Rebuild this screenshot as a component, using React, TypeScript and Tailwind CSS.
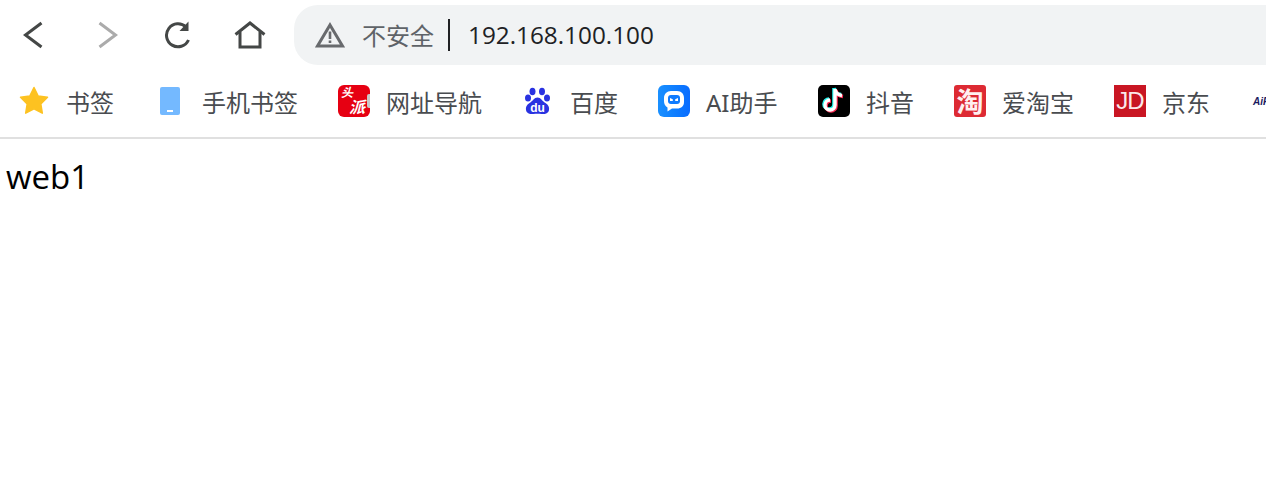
import type { ReactNode } from "react";

const CJK = "font-['Noto_Sans','Noto_Sans_CJK_SC',sans-serif]";

function Back() {
  return (
    <svg width="24" height="28" viewBox="0 0 24 28" fill="none" stroke="#444746" strokeWidth="3">
      <path d="M19.5 2 L3.5 14 L19.5 26" />
    </svg>
  );
}

function Forward() {
  return (
    <svg width="24" height="28" viewBox="0 0 24 28" fill="none" stroke="#ababab" strokeWidth="3">
      <path d="M5.5 2 L21.5 14 L5.5 26" />
    </svg>
  );
}

function Reload() {
  return (
    <svg width="28" height="28" viewBox="0 0 28 28" fill="none">
      <path d="M24.5 19 A11.5 11.5 0 1 1 22 6" stroke="#444746" strokeWidth="3" />
      <path d="M24.5 0.5 V10 H15.5 Z" fill="#444746" />
    </svg>
  );
}

function Home() {
  return (
    <svg width="32" height="28" viewBox="0 0 32 28" fill="none" stroke="#444746" strokeWidth="3">
      <path d="M1.5 13.5 L16 2 L30.5 13.5" />
      <path d="M6 11 V26 H26 V11" />
    </svg>
  );
}

function Warning() {
  return (
    <svg width="30" height="26" viewBox="0 0 30 26" fill="none">
      <path d="M15 3 L27.5 24 H2.5 Z" stroke="#686a6d" strokeWidth="3" />
      <path d="M13.7 9.5 H16.3 V17 H13.7 Z M13.7 18.5 H16.3 V21 H13.7 Z" fill="#686a6d" />
    </svg>
  );
}

function Star() {
  return (
    <svg width="32" height="32" viewBox="0 0 32 32">
      <path
        d="M16 2.5 L20.2 11 L29.5 12.3 L22.8 18.9 L24.3 28.2 L16 23.8 L7.7 28.2 L9.2 18.9 L2.5 12.3 L11.8 11 Z"
        fill="#fdc221"
        stroke="#fdc221"
        strokeWidth="1.5"
        strokeLinejoin="round"
      />
    </svg>
  );
}

function Phone() {
  return (
    <div className="flex h-[28px] w-[20px] items-end justify-center rounded-[2px] bg-[#74b9ff] pb-[3px]">
      <div className="h-[2px] w-[6px] bg-white" />
    </div>
  );
}

function TouTiao() {
  return (
    <div className="relative h-8 w-8 overflow-hidden rounded-[6px] bg-[#e60012] font-bold text-white">
      <span className={`absolute left-[3px] top-[2px] text-[12px] leading-[12px] italic ${CJK}`}>头</span>
      <span className={`absolute left-[11px] top-[14px] text-[16px] leading-[16px] italic ${CJK}`}>派</span>
      <div className="absolute right-0 top-[9px] h-[14px] w-[3px] rounded-l-[2px] bg-[#c9c9c9]" />
    </div>
  );
}

function Baidu() {
  return (
    <svg width="32" height="32" viewBox="0 0 32 32" fill="#2932e1">
      <ellipse cx="10.5" cy="6.5" rx="3" ry="3.8" />
      <ellipse cx="20" cy="6.5" rx="3" ry="3.8" />
      <ellipse cx="6" cy="13" rx="3" ry="3.6" />
      <ellipse cx="25" cy="13" rx="3" ry="3.6" />
      <path d="M15.5 12.5 C19 12.5 20 16 23.5 18 C26.5 20 27.5 22 27 25 C26.5 28.5 22.5 29.5 19.5 29 C17 28.6 14 28.6 11.5 29 C8.5 29.5 4.5 28.5 4 25 C3.5 22 4.5 20 7.5 18 C11 16 12 12.5 15.5 12.5 Z" />
      <text x="15.5" y="26.5" textAnchor="middle" fontSize="12" fontWeight="700" fill="#fff" fontFamily="Liberation Sans">du</text>
    </svg>
  );
}

function Assistant() {
  return (
    <div className="flex h-8 w-8 items-center justify-center rounded-[6px] bg-linear-to-r from-[#1a90ff] to-[#0a6cff]">
      <svg width="24" height="24" viewBox="0 0 24 24">
        <path d="M12 2 H15 C19.5 2 22 5 22 9 V13 C22 17 19.5 19.5 15 19.5 H10 L5.5 22.5 V18.5 C3 17 2 15 2 12 V9 C2 5 5 2 9 2 Z" fill="#fff" />
        <rect x="6" y="6" width="12" height="9" rx="3" fill="#0f7bff" />
        <path d="M8 9 L10.8 10.2 V12 H8 Z" fill="#fff" />
        <path d="M16 9 L13.2 10.2 V12 H16 Z" fill="#fff" />
      </svg>
    </div>
  );
}

function TikTok() {
  const note = "M17 4 V20 A5 5 0 1 1 12 15 M17 4 C17.5 8 20 10 24 10.5";
  return (
    <div className="h-8 w-8 rounded-[5px] bg-black">
      <svg width="32" height="32" viewBox="0 0 32 32" fill="none" strokeWidth="3.6">
        <path d={note} stroke="#25f4ee" transform="translate(-1 -1)" />
        <path d={note} stroke="#fe2c55" transform="translate(1 1)" />
        <path d={note} stroke="#fff" strokeWidth="3.4" />
      </svg>
    </div>
  );
}

function Tao() {
  return (
    <div className={`flex h-8 w-8 items-center justify-center rounded-[3px] bg-[#dd2a33] text-[27px] leading-none font-bold text-[#fff0f0] ${CJK}`}>
      淘
    </div>
  );
}

function Jd() {
  return (
    <div className="flex h-8 w-8 items-center justify-center bg-[#c91623] font-['Liberation_Sans',sans-serif] text-[24px] leading-none tracking-[-1px] text-[#fbe8ea]">
      JD
    </div>
  );
}

const bookmarks: { icon: ReactNode; label: string; labelClass?: string }[] = [
  { icon: <Star />, label: "书签" },
  { icon: <Phone />, label: "手机书签" },
  { icon: <TouTiao />, label: "网址导航" },
  { icon: <Baidu />, label: "百度" },
  { icon: <Assistant />, label: "AI助手", labelClass: "min-w-[72px]" },
  { icon: <TikTok />, label: "抖音" },
  { icon: <Tao />, label: "爱淘宝" },
  { icon: <Jd />, label: "京东" },
];

export default function App() {
  return (
    <div className="h-[499px] w-[1266px] overflow-hidden bg-white">
      <div className="flex h-[72px] items-start pl-[10px] pt-[5px]">
        <div className="flex h-[60px] items-center gap-6">
          <div className="flex w-12 justify-center"><Back /></div>
          <div className="flex w-12 justify-center"><Forward /></div>
          <div className="flex w-12 justify-center"><Reload /></div>
          <div className="flex w-12 justify-center"><Home /></div>
        </div>
        <div className="ml-5 flex h-[60px] flex-1 items-center rounded-l-[24px] bg-[#f1f3f4] pl-[21px]">
          <Warning />
          <span className={`ml-[17px] pt-[2px] text-[24px] text-[#5f6368] ${CJK}`}>不安全</span>
          <div className="ml-[14px] h-8 w-[2px] bg-[#202124]" />
          <span className="ml-[18px] font-['Open_Sans',sans-serif] text-[24.3px] text-[#202124]">192.168.100.100</span>
        </div>
      </div>
      <div className="flex h-[67px] items-center gap-10 overflow-hidden whitespace-nowrap border-b-2 border-[#e0e0e0] pb-[7px] pl-[18px]">
        {bookmarks.map((b) => (
          <div key={b.label} className="flex shrink-0 items-center gap-4">
            <div className="flex h-8 w-8 items-center justify-center">{b.icon}</div>
            <span className={`mt-[4px] text-[24px] text-[#494c50] ${CJK} ${b.labelClass ?? ""}`}>{b.label}</span>
          </div>
        ))}
        {/* next bookmark, clipped by the window edge */}
        <span className="ml-[3px] shrink-0 font-['Liberation_Sans',sans-serif] text-[10px] font-bold italic text-[#1a1a5e]">AiF</span>
      </div>
      <p className="pl-[6px] pt-4 font-['Open_Sans',sans-serif] text-[33px] leading-[44px] text-black">web1</p>
    </div>
  );
}
